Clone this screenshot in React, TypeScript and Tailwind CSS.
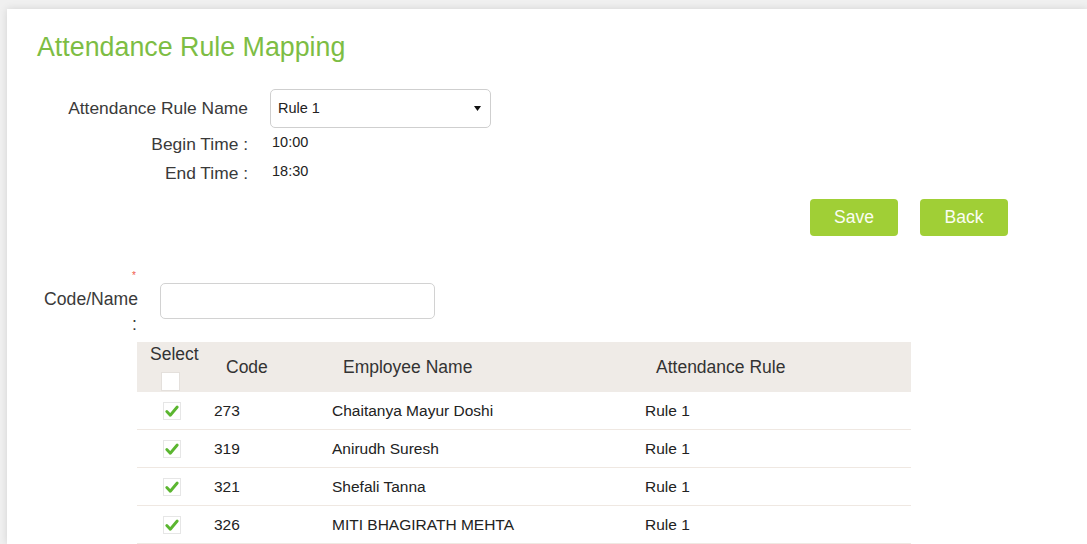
import React from "react";

const rows = [
  { code: "273", name: "Chaitanya Mayur Doshi", rule: "Rule 1" },
  { code: "319", name: "Anirudh Suresh", rule: "Rule 1" },
  { code: "321", name: "Shefali Tanna", rule: "Rule 1" },
  { code: "326", name: "MITI BHAGIRATH MEHTA", rule: "Rule 1" },
];

function CheckedBox() {
  return (
    <svg width="18" height="18" viewBox="0 0 18 18" className="block">
      <rect x="0.5" y="0.5" width="17" height="17" fill="#fff" stroke="#e6e6e6" />
      <path
        d="M3.8 9.6 L7.3 13.2 L14.2 5"
        fill="none"
        stroke="#5bb630"
        strokeWidth="2.9"
        strokeLinecap="round"
        strokeLinejoin="round"
      />
    </svg>
  );
}

export default function App() {
  return (
    <div
      className="h-[544px] overflow-hidden bg-[#f0f0f0] pl-[7px] pt-[9px]"
      style={{ fontFamily: '"Liberation Sans", Arial, sans-serif' }}
    >
      <div className="h-full bg-white pl-[30px] pt-[23px] shadow-[0_0_8px_rgba(0,0,0,0.12)]">
        <h1 className="text-[26.8px] leading-[30px] text-[#7dbd44]">Attendance Rule Mapping</h1>

        {/* Rule selection */}
        <div className="mt-[27px] flex items-center">
          <div className="w-[211px] text-right text-[17.4px] text-[#3a3a3a]">Attendance Rule Name</div>
          <div className="ml-[22px] flex h-[39px] w-[221px] items-center justify-between rounded-[5px] border border-[#cfcfcf] pl-[7px] pr-[9px] text-[14.5px] text-[#222]">
            <span>Rule 1</span>
            <svg width="7" height="5" viewBox="0 0 7 5">
              <path d="M0 0 H7 L3.5 5 Z" fill="#111" />
            </svg>
          </div>
        </div>
        <div className="flex h-[29px] items-center">
          <div className="w-[211px] pt-[4px] text-right text-[17.4px] text-[#3a3a3a]">Begin Time :</div>
          <div className="ml-[24px] text-[14.5px] text-[#222]">10:00</div>
        </div>
        <div className="flex h-[29px] items-center">
          <div className="w-[211px] pt-[4px] text-right text-[17.4px] text-[#3a3a3a]">End Time :</div>
          <div className="ml-[24px] text-[14.5px] text-[#222]">18:30</div>
        </div>

        {/* Actions */}
        <div className="mt-[13px] flex justify-end gap-[22px] pr-[79px]">
          <button className="h-[37px] w-[88px] rounded-[4px] bg-[#a0cf36] text-[17.5px] text-[#fbfdf3]">Save</button>
          <button className="h-[37px] w-[88px] rounded-[4px] bg-[#a0cf36] text-[17.5px] text-[#fbfdf3]">Back</button>
        </div>

        {/* Search */}
        <div className="mt-[26px] flex items-start">
          <div className="w-[101px] text-right text-[17.6px] leading-[25px] text-[#3a3a3a]">
            <div className="pr-[2px] pt-[3px] text-[10px] leading-[22px] text-[#f05a4a]">*</div>
            <div>Code/Name</div>
            <div className="pr-[1px]">:</div>
          </div>
          <input
            type="text"
            className="ml-[22px] mt-[21px] h-[36px] w-[275px] rounded-[5px] border border-[#d2d2d2] bg-white outline-none"
          />
        </div>

        {/* Employee table */}
        <div className="ml-[100px] mt-[5px] w-[774px]">
          <div className="grid h-[50px] grid-cols-[77px_118px_313px_1fr] bg-[#efebe7] text-[17.5px] text-[#333]">
            <div className="flex flex-col pl-[13px] pt-[2px]">
              <span className="leading-[20px]">Select</span>
              <span className="ml-[11px] mt-[8px] block h-[19px] w-[19px] border border-[#e4e0dc] bg-white" />
            </div>
            <div className="flex items-center pl-[12px]">Code</div>
            <div className="flex items-center pl-[11px]">Employee Name</div>
            <div className="flex items-center pl-[11px]">Attendance Rule</div>
          </div>
          {rows.map((r) => (
            <div
              key={r.code}
              className="grid h-[38px] grid-cols-[77px_118px_313px_1fr] items-center border-b border-[#efe8e2] text-[15.5px] text-[#222]"
            >
              <div className="pl-[26px] pt-[1px]">
                <CheckedBox />
              </div>
              <div>{r.code}</div>
              <div>{r.name}</div>
              <div>{r.rule}</div>
            </div>
          ))}
        </div>
      </div>
    </div>
  );
}
